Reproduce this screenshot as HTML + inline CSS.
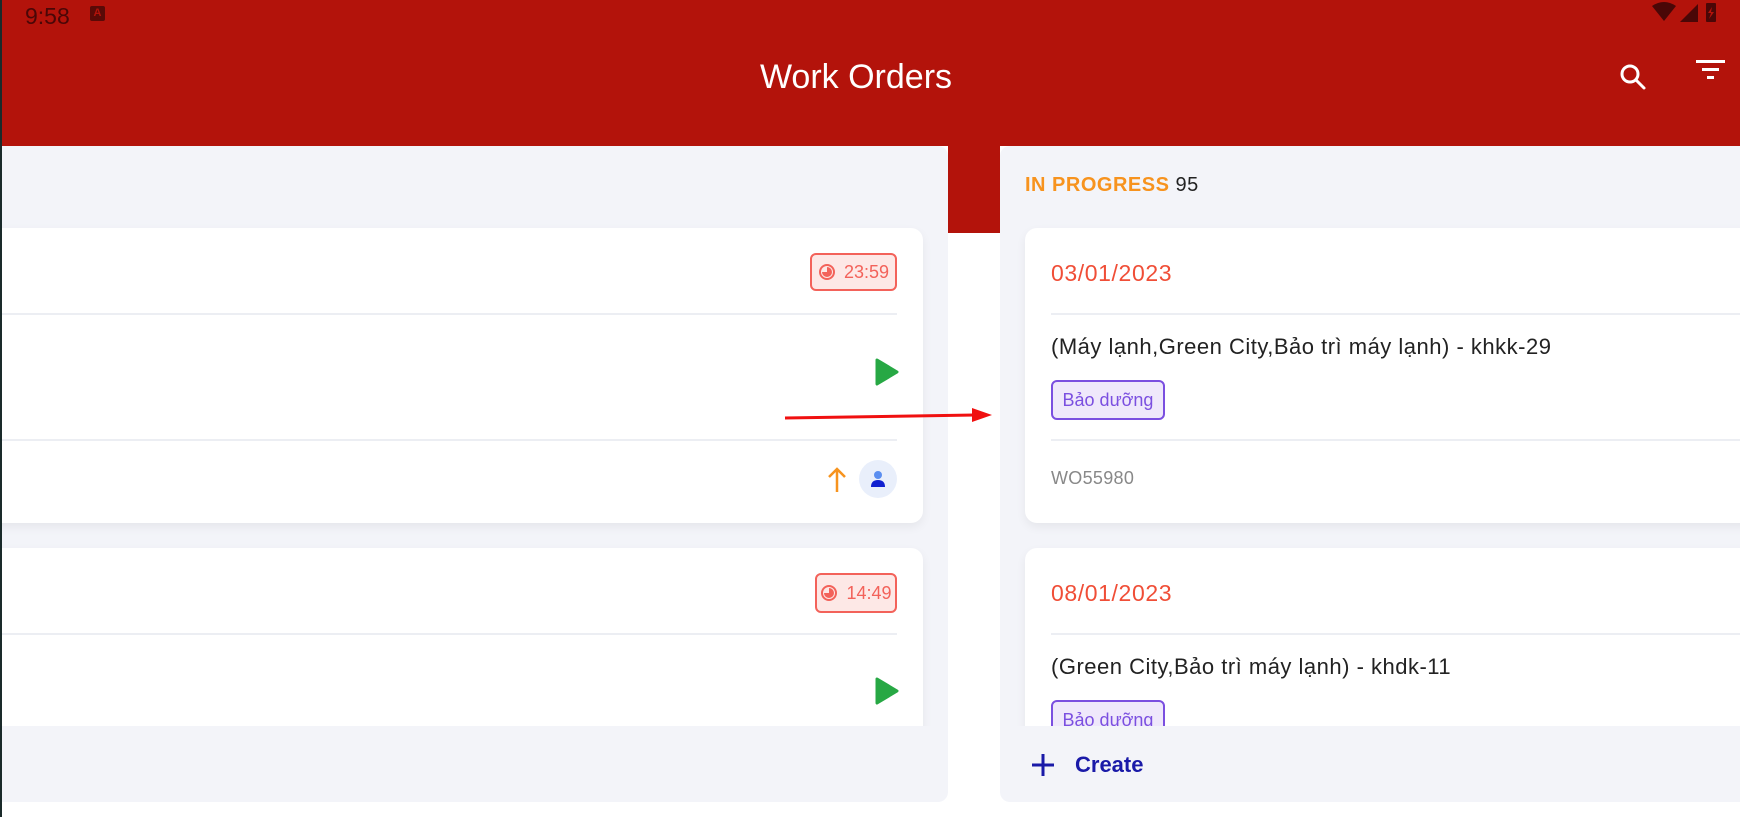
<!DOCTYPE html>
<html><head><meta charset="utf-8"><style>
*{margin:0;padding:0;box-sizing:border-box}
body{width:1740px;height:817px;overflow:hidden;background:#fff;font-family:"Liberation Sans",sans-serif;position:relative}
.abs{position:absolute}
.hdr{left:0;top:0;width:1740px;height:146px;background:#b3130b}
.gapred{left:948px;top:146px;width:52px;height:87px;background:#b3130b}
.edge{left:0;top:0;width:2px;height:817px;background:#1a2a2a}
.panel{background:#f3f4f9;border-radius:10px}
.clip{overflow:hidden}
.card{position:absolute;background:#fff;border-radius:12px;box-shadow:0 4px 10px rgba(0,0,0,.06)}
.div{position:absolute;height:2px;background:#eceef3}
.badge{position:absolute;border:2px solid #f3625a;background:#fde8e6;border-radius:6px;color:#f3625a;font-size:18px;display:flex;align-items:center;justify-content:center;gap:8px}
.date{position:absolute;left:26px;color:#f04e37;font-size:23px;letter-spacing:0.6px}
.title{position:absolute;left:26px;color:#222;font-size:22px;letter-spacing:0.5px}
.tag{position:absolute;left:26px;width:114px;height:40px;border:2px solid #7b4fe0;background:#efe8fb;border-radius:6px;color:#7b4fe0;font-size:18px;display:flex;align-items:center;justify-content:center}
</style></head><body>
<div class="abs hdr"></div>
<div class="abs gapred"></div>
<div class="abs" style="left:25px;top:3px;color:#4a0707;font-size:23px">9:58</div>
<div class="abs" style="left:90px;top:6px;width:15px;height:15px;background:#5a0a07;border-radius:2px;color:#b3130b;font-size:11px;font-weight:bold;text-align:center;line-height:15px">A</div>
<svg class="abs" style="left:1650px;top:0" width="90" height="26" viewBox="0 0 90 26"><path d="M2 6 Q14 -2 26 6 L14 21Z" fill="#4a0707"/><path d="M30 22 L48 4 L48 22Z" fill="#4a0707"/><rect x="56" y="3" width="10" height="19" rx="1" fill="#4a0707"/><path d="M62 7 L58 13 L61 13 L59 19 L64 12 L61 12Z" fill="#b3130b"/></svg>
<div class="abs" style="left:0;width:1712px;top:58px;text-align:center;color:#fff;font-size:34px">Work Orders</div>
<svg class="abs" style="left:1618px;top:62px" width="30" height="30" viewBox="0 0 30 30"><circle cx="12" cy="12" r="8" stroke="#fff" stroke-width="3" fill="none"/><path d="M18 18 L26 26" stroke="#fff" stroke-width="3" stroke-linecap="round"/></svg>
<svg class="abs" style="left:1695px;top:58px" width="32" height="24" viewBox="0 0 32 24"><rect x="1" y="2" width="29" height="3" fill="#fff"/><rect x="7" y="10" width="17" height="3" fill="#fff"/><rect x="12" y="18" width="7" height="3" fill="#fff"/></svg>

<div class="abs panel" style="left:-10px;top:146px;width:958px;height:656px"></div>
<div class="abs clip" style="left:0;top:146px;width:948px;height:580px">
 <div class="card" style="left:-20px;top:82px;width:943px;height:295px">
  <div class="badge" style="left:830px;top:25px;width:87px;height:38px"><svg width="18" height="18" viewBox="0 0 18 18"><circle cx="9" cy="9" r="7" stroke="#f3625a" stroke-width="2" fill="none"/><path d="M9 4 A5 5 0 1 1 4 9 L9 9Z" fill="#f3625a"/></svg>23:59</div>
  <div class="div" style="left:0;top:85px;width:917px"></div>
  <svg class="abs" style="left:895px;top:130px" width="24" height="28" viewBox="0 0 24 28"><path d="M2 2 L22 14 L2 26Z" fill="#27a844" stroke="#27a844" stroke-width="3" stroke-linejoin="round"/></svg>
  <div class="div" style="left:0;top:211px;width:917px"></div>
  <svg class="abs" style="left:847px;top:238px" width="20" height="28" viewBox="0 0 20 28"><path d="M10 26 V3 M2 11 L10 3 L18 11" stroke="#f7931e" stroke-width="2.5" fill="none"/></svg>
  <div class="abs" style="left:879px;top:232px;width:38px;height:38px;border-radius:50%;background:#e9effb"></div>
  <svg class="abs" style="left:888px;top:241px" width="20" height="20" viewBox="0 0 20 20"><circle cx="10" cy="6" r="4" fill="#5b8ef0"/><path d="M3 18 Q3 11 10 11 Q17 11 17 18Z" fill="#1020d0"/></svg>
 </div>
 <div class="card" style="left:-20px;top:402px;width:943px;height:295px">
  <div class="badge" style="left:835px;top:25px;width:82px;height:40px"><svg width="18" height="18" viewBox="0 0 18 18"><circle cx="9" cy="9" r="7" stroke="#f3625a" stroke-width="2" fill="none"/><path d="M9 4 A5 5 0 1 1 4 9 L9 9Z" fill="#f3625a"/></svg>14:49</div>
  <div class="div" style="left:0;top:85px;width:917px"></div>
  <svg class="abs" style="left:895px;top:129px" width="24" height="28" viewBox="0 0 24 28"><path d="M2 2 L22 14 L2 26Z" fill="#27a844" stroke="#27a844" stroke-width="3" stroke-linejoin="round"/></svg>
 </div>
</div>
<div class="abs edge"></div>

<div class="abs panel" style="left:1000px;top:146px;width:760px;height:656px"></div>
<div class="abs" style="left:1025px;top:174px;font-size:20px;font-weight:bold;color:#f7931e;letter-spacing:0.5px">IN PROGRESS <span style="color:#222;font-weight:normal">95</span></div>
<div class="abs clip" style="left:1000px;top:146px;width:740px;height:580px">
 <div class="card" style="left:25px;top:82px;width:760px;height:295px">
  <div class="date" style="top:32px">03/01/2023</div>
  <div class="div" style="left:26px;top:85px;width:740px"></div>
  <div class="title" style="top:106px">(Máy lạnh,Green City,Bảo trì máy lạnh) - khkk-29</div>
  <div class="tag" style="top:152px">Bảo dưỡng</div>
  <div class="div" style="left:26px;top:211px;width:740px"></div>
  <div class="abs" style="left:26px;top:240px;color:#888;font-size:18px;letter-spacing:0.3px">WO55980</div>
 </div>
 <div class="card" style="left:25px;top:402px;width:760px;height:295px">
  <div class="date" style="top:32px">08/01/2023</div>
  <div class="div" style="left:26px;top:85px;width:740px"></div>
  <div class="title" style="top:106px">(Green City,Bảo trì máy lạnh) - khdk-11</div>
  <div class="tag" style="top:152px">Bảo dưỡng</div>
 </div>
</div>
<svg class="abs" style="left:1031px;top:753px" width="24" height="24" viewBox="0 0 24 24"><path d="M12 1 V23 M1 12 H23" stroke="#1a1aa8" stroke-width="3"/></svg>
<div class="abs" style="left:1075px;top:752px;color:#1a1aa8;font-size:22px;font-weight:bold">Create</div>

<svg class="abs" style="left:780px;top:405px" width="215" height="20" viewBox="0 0 215 20"><path d="M5 13 L195 10" stroke="#f01010" stroke-width="3"/><path d="M192 3 L212 10 L192 17Z" fill="#f01010"/></svg>
</body></html>
